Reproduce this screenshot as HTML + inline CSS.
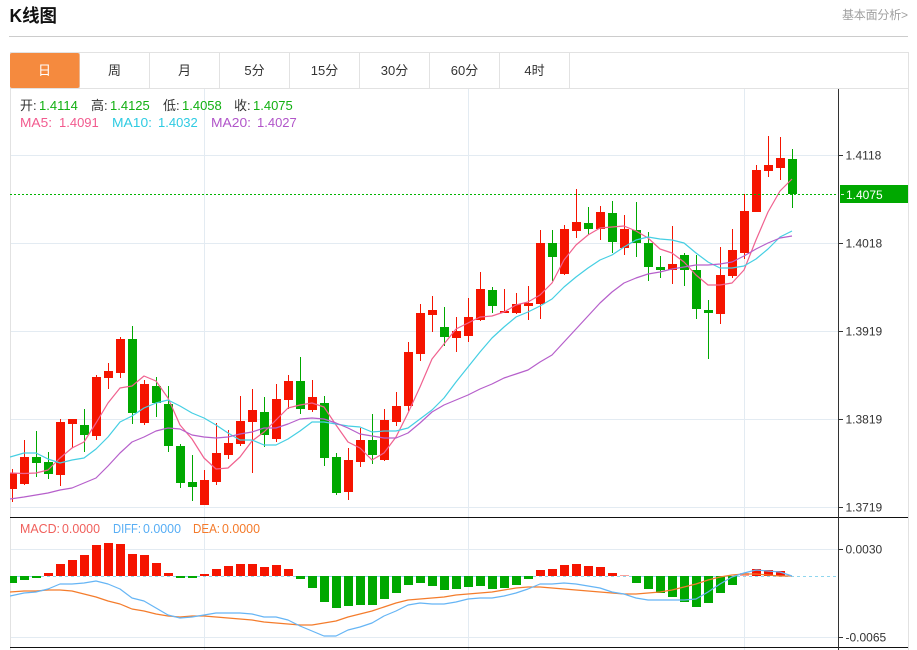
<!DOCTYPE html>
<html lang="zh"><head><meta charset="utf-8"><title>K线图</title>
<style>
html,body{margin:0;padding:0;background:#fff;width:917px;height:650px;overflow:hidden}
svg{display:block;font-family:"Liberation Sans","Noto Sans CJK SC",sans-serif}
</style></head><body>
<svg xmlns="http://www.w3.org/2000/svg" width="917" height="650" viewBox="0 0 917 650">
<defs><clipPath id="c"><rect x="10" y="89" width="828" height="561"/></clipPath></defs>
<text x="9.500" y="22" font-size="18" font-weight="bold" fill="#111" textLength="47.500" lengthAdjust="spacingAndGlyphs">K线图</text>
<text x="842" y="19" font-size="12" fill="#a0a0a0" textLength="66">基本面分析&gt;</text>
<rect x="9" y="36" width="899" height="1" fill="#ccc"/>

<g shape-rendering="crispEdges">
<rect x="10" y="52" width="899" height="1" fill="#e2e2e2"/>
<rect x="10" y="88" width="899" height="1" fill="#e2e2e2"/>
<rect x="10" y="52" width="1" height="598" fill="#e2e2e2"/>
<rect x="908" y="52" width="1" height="598" fill="#e2e2e2"/>
<path d="M79.500 53V88M149.500 53V88M219.500 53V88M289.500 53V88M359.500 53V88M429.500 53V88M499.500 53V88M569.500 53V88" stroke="#e2e2e2" fill="none"/>
</g>
<rect x="10" y="53" width="69.500" height="35" rx="2" fill="#f58a3e"/>
<g font-size="13" fill="#333" text-anchor="middle">
<text x="44.500" y="75" fill="#fff">日</text>
<text x="114.500" y="75">周</text>
<text x="184.500" y="75">月</text>
<text x="254.500" y="75">5分</text>
<text x="324.500" y="75">15分</text>
<text x="394.500" y="75">30分</text>
<text x="464.500" y="75">60分</text>
<text x="534.500" y="75">4时</text>
</g>

<g stroke="#e3ebf2" fill="none" shape-rendering="crispEdges">
<path d="M11 155.500H838M11 243.500H838M11 331.500H838M11 419.500H838M11 507.500H838M11 549.500H838M11 637.500H838"/>
<path d="M204.500 89V650M468.500 89V650M744.500 89V650"/>
</g>

<g clip-path="url(#c)">
<g stroke="#f51400" fill="none" shape-rendering="crispEdges">
<path d="M12.500 469V502M24.500 440V485M60.500 419V486M72.500 419V448M96.500 375V440M108.500 363V389M120.500 337V378M144.500 380V425M204.500 470V505M216.500 423V485M228.500 430V459M240.500 396V446M252.500 389V473M276.500 384V442M288.500 375V409M312.500 380V412M348.500 448V500M360.500 428V467M384.500 409V461M396.500 392V426M408.500 342V411M420.500 304V361M432.500 296V332M456.500 317V352M468.500 298V342M480.500 272V321M504.500 289V313M516.500 293V314M528.500 286V320M540.500 230V319M564.500 225V275M576.500 189V238M600.500 206V240M624.500 215V255M672.500 226V284M720.500 247V324M732.500 229V278M744.500 194V259M756.500 165V212M768.500 136V177M780.500 137V180"/>
</g>
<path shape-rendering="crispEdges" fill="#f51400" d="M8 473h9v16h-9zM20 457h9v27h-9zM56 422h9v53h-9zM68 419h9v5h-9zM92 377h9v59h-9zM104 371h9v7h-9zM116 339h9v34h-9zM140 384h9v39h-9zM200 480h9v25h-9zM212 453h9v29h-9zM224 443h9v12h-9zM236 421h9v23h-9zM248 410h9v12h-9zM272 399h9v40h-9zM284 381h9v19h-9zM308 397h9v13h-9zM344 460h9v32h-9zM356 440h9v22h-9zM380 420h9v40h-9zM392 406h9v16h-9zM404 352h9v54h-9zM416 313h9v41h-9zM428 310h9v5h-9zM452 331h9v7h-9zM464 317h9v19h-9zM476 289h9v31h-9zM500 311h9v2h-9zM512 304h9v9h-9zM524 303h9v3h-9zM536 243h9v61h-9zM560 229h9v45h-9zM572 222h9v9h-9zM596 212h9v17h-9zM620 229h9v19h-9zM668 264h9v6h-9zM716 275h9v39h-9zM728 250h9v26h-9zM740 211h9v42h-9zM752 170h9v42h-9zM764 165h9v6h-9zM776 158h9v10h-9z"/>
<g stroke="#00a800" fill="none" shape-rendering="crispEdges">
<path d="M36.500 431V477M48.500 452V479M84.500 409V452M132.500 326V424M156.500 377V417M168.500 386V452M180.500 444V488M192.500 455V501M264.500 397V447M300.500 357V414M324.500 396V466M336.500 453V495M372.500 414V464M444.500 307V346M492.500 287V313M552.500 230V281M588.500 207V235M612.500 201V253M636.500 202V257M648.500 232V281M660.500 256V278M684.500 253V286M696.500 255V319M708.500 300V359M792.500 149V208"/>
</g>
<path shape-rendering="crispEdges" fill="#00a800" d="M32 457h9v6h-9zM44 462h9v12h-9zM80 425h9v10h-9zM128 339h9v74h-9zM152 386h9v17h-9zM164 404h9v42h-9zM176 446h9v37h-9zM188 482h9v5h-9zM260 412h9v23h-9zM296 381h9v28h-9zM320 403h9v55h-9zM332 457h9v36h-9zM368 440h9v15h-9zM440 327h9v10h-9zM488 290h9v16h-9zM548 243h9v14h-9zM584 223h9v6h-9zM608 213h9v29h-9zM632 230h9v13h-9zM644 243h9v24h-9zM656 267h9v3h-9zM680 255h9v15h-9zM692 270h9v39h-9zM704 310h9v3h-9zM788 159h9v35h-9z"/>

<g fill="none" stroke-width="1.200" stroke-linejoin="round">
<polyline stroke="#f0618f" points="10,473 24,473.500 36,473 48,470 60,458 72,448 84,442 96,423 108,403 120,388 132,386 144,376 156,381 168,398 180,425 192,439 204,458 216,469 228,468 240,457 252,441 264,432 276,420 288,408 300,405 312,403 324,407 336,425 348,442 360,448 372,460 384,453 396,437 408,413 420,387 432,359 444,344 456,329 468,323 480,317 492,316 504,312 516,305 528,302 540,295 552,283 564,260 576,245 588,235 600,228 612,227 624,226 636,231 648,238 660,249 672,253 684,262 696,275 708,285 720,285 732,283 744,270 756,240 768,212 780,191 792,179"/>
<polyline stroke="#45cfe3" points="10,457 24,453 36,453 48,459 60,463 72,460 84,458 96,449 108,437 120,422 132,416 144,408 156,403 168,400 180,406 192,413 204,418 216,425 228,433 240,440 252,440 264,445 276,445 288,439 300,431 312,422 324,422 336,424 348,426 360,427 372,432 384,431 396,431 408,428 420,419 432,410 444,398 456,382 468,367 480,352 492,338 504,327 516,317 528,312 540,306 552,299 564,287 576,277 588,268 600,260 612,255 624,247 636,240 648,237 660,239 672,240 684,243 696,253 708,262 720,268 732,268 744,266 756,259 768,249 780,237 792,231"/>
<polyline stroke="#b65fcb" points="10,499 24,497 36,495 48,493 60,490 72,488 84,483 96,478 108,466 120,453 132,442 144,437 156,431 168,428 180,429 192,435 204,437 216,438 228,437 240,434 252,432 264,428 276,428 288,424 300,419 312,418 324,419 336,423 348,428 360,434 372,436 384,438 396,438 408,433 420,423 432,412 444,405 456,400 468,395 480,389 492,384 504,378 516,374 528,370 540,362 552,355 564,342 576,329 588,316 600,303 612,292 624,283 636,278 648,274 660,272 672,269 684,267 696,265 708,265 720,264 732,262 744,256 756,249 768,243 780,238 792,236"/>
</g>

<path d="M10 194.500H838" stroke="#00b400" stroke-dasharray="2 2" fill="none" shape-rendering="crispEdges"/>

<path d="M11 576.500H838" stroke="#8fd6ee" stroke-dasharray="3 3" fill="none" shape-rendering="crispEdges"/>
<path shape-rendering="crispEdges" fill="#f51400" d="M44 573h9v3h-9zM56 564h9v12h-9zM68 560h9v16h-9zM80 555h9v21h-9zM92 545h9v31h-9zM104 543h9v33h-9zM116 544h9v32h-9zM128 554h9v22h-9zM140 555h9v21h-9zM152 563h9v13h-9zM164 573h9v3h-9zM200 574h9v2h-9zM212 569h9v7h-9zM224 566h9v10h-9zM236 564h9v12h-9zM248 564h9v12h-9zM260 567h9v9h-9zM272 565h9v11h-9zM284 569h9v7h-9zM536 570h9v6h-9zM548 569h9v7h-9zM560 565h9v11h-9zM572 564h9v12h-9zM584 566h9v10h-9zM596 567h9v9h-9zM608 573h9v3h-9zM752 569h9v7h-9zM764 570h9v6h-9zM776 571h9v5h-9z"/>
<path shape-rendering="crispEdges" fill="#f9a09a" d="M620 575h9v1h-9zM740 573h9v3h-9z"/>
<path shape-rendering="crispEdges" fill="#00a800" d="M8 576h9v7h-9zM20 576h9v4h-9zM32 576h9v2h-9zM176 576h9v2h-9zM188 576h9v2h-9zM296 576h9v3h-9zM308 576h9v12h-9zM320 576h9v26h-9zM332 576h9v32h-9zM344 576h9v30h-9zM356 576h9v29h-9zM368 576h9v29h-9zM380 576h9v23h-9zM392 576h9v17h-9zM404 576h9v9h-9zM416 576h9v7h-9zM428 576h9v10h-9zM440 576h9v14h-9zM452 576h9v13h-9zM464 576h9v11h-9zM476 576h9v10h-9zM488 576h9v13h-9zM500 576h9v12h-9zM512 576h9v9h-9zM524 576h9v3h-9zM632 576h9v7h-9zM644 576h9v13h-9zM656 576h9v17h-9zM668 576h9v21h-9zM680 576h9v26h-9zM692 576h9v31h-9zM704 576h9v27h-9zM716 576h9v17h-9zM728 576h9v9h-9z"/>

<g fill="none" stroke-width="1.200" stroke-linejoin="round">
<polyline stroke="#f47c2c" points="10,592 24,591 36,591 48,590 60,590 72,591 84,594 96,597 108,601 120,604 132,609 144,611 156,614 168,616 180,617 192,616 204,616 216,617 228,618 240,619 252,620 264,622 276,623 288,624 300,625 312,625 324,623 336,621 348,617 360,614 372,611 384,607 396,603 408,600 420,599 432,598 444,597 456,595 468,594 480,593 492,592 504,590 516,588 528,587 540,587 552,588 564,589 576,590 588,591 600,592 612,593 624,594 636,594 648,593 660,592 672,590 684,587 696,584 708,580 720,577 732,575 744,574 756,574 768,575 780,576 792,576"/>
<polyline stroke="#66b5f5" points="10,596 24,593 36,592 48,589 60,584 72,584 84,583 96,581 108,584 120,589 132,598 144,601 156,608 168,615 180,618 192,617 204,615 216,613 228,613 240,613 252,614 264,617 276,617 288,620 300,626 312,631 324,636 336,636 348,630 360,627 372,623 384,616 396,611 408,605 420,603 432,604 444,604 456,602 468,599 480,598 492,598 504,596 516,593 528,589 540,584 552,584 564,583 576,584 588,586 600,588 612,592 624,594 636,598 648,600 660,600 672,600 684,600 696,599 708,592 720,584 732,577 744,573 756,570 768,571 780,572 792,576"/>
</g>
</g>

<g shape-rendering="crispEdges" fill="none">
<path d="M10 517.500H908" stroke="#111"/>
<path d="M10 647.500H908" stroke="#111"/>
<path d="M838.500 89V650" stroke="#333"/>
<path d="M838 155.500h5M838 243.500h5M838 331.500h5M838 419.500h5M838 507.500h5M838 549.500h5M838 637.500h5" stroke="#333"/>
</g>
<g font-size="12" fill="#333">
<text x="845.500" y="159.500">1.4118</text>
<text x="845.500" y="247.500">1.4018</text>
<text x="845.500" y="335.500">1.3919</text>
<text x="845.500" y="423.500">1.3819</text>
<text x="845.500" y="511.500">1.3719</text>
<text x="845.500" y="553.500">0.0030</text>
<text x="845.500" y="641.500">-0.0065</text>
</g>
<rect x="840" y="185" width="68" height="18" fill="#00a800"/>
<rect x="841" y="194" width="3" height="1" fill="#d8f5d8"/>
<text x="846" y="199" font-size="12" fill="#fff">1.4075</text>

<g font-size="13">
<g fill="#333">
<text x="20" y="110">开:</text><text x="91" y="110">高:</text><text x="163" y="110">低:</text><text x="234" y="110">收:</text>
</g>
<g fill="#12b012">
<text x="39" y="110">1.4114</text><text x="110" y="110">1.4125</text><text x="182" y="110">1.4058</text><text x="253" y="110">1.4075</text>
</g>
<g fill="#f25a8e"><text x="20" y="127" textLength="32" lengthAdjust="spacingAndGlyphs">MA5:</text><text x="59" y="127">1.4091</text></g>
<g fill="#2fcbe2"><text x="112" y="127" textLength="40" lengthAdjust="spacingAndGlyphs">MA10:</text><text x="158" y="127">1.4032</text></g>
<g fill="#b155c9"><text x="211" y="127" textLength="40" lengthAdjust="spacingAndGlyphs">MA20:</text><text x="257" y="127">1.4027</text></g>
</g>
<g font-size="12.500">
<g fill="#f0605c"><text x="20" y="533" textLength="40" lengthAdjust="spacingAndGlyphs">MACD:</text><text x="62" y="533" textLength="38" lengthAdjust="spacingAndGlyphs">0.0000</text></g>
<g fill="#57aef5"><text x="113" y="533" textLength="28" lengthAdjust="spacingAndGlyphs">DIFF:</text><text x="143" y="533" textLength="38" lengthAdjust="spacingAndGlyphs">0.0000</text></g>
<g fill="#f47a2a"><text x="193" y="533" textLength="27" lengthAdjust="spacingAndGlyphs">DEA:</text><text x="222" y="533" textLength="38" lengthAdjust="spacingAndGlyphs">0.0000</text></g>
</g>
</svg>
</body></html>
